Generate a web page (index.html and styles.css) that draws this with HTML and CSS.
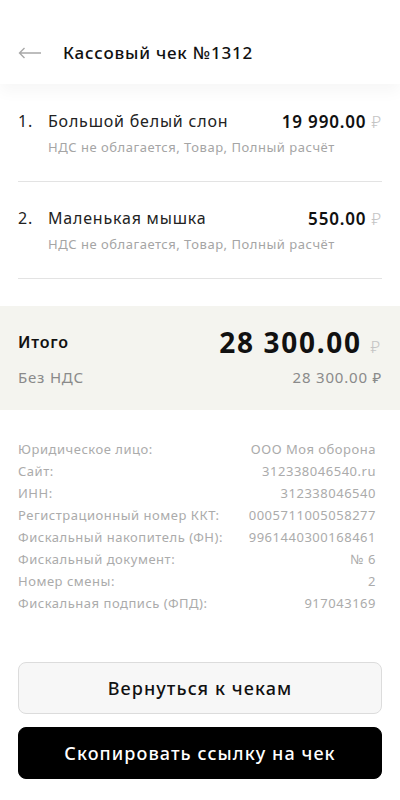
FILE: index.html
```html
<!DOCTYPE html>
<html lang="ru">
<head>
  <meta charset="utf-8">
  <title>Кассовый чек №1312</title>
  <link rel="stylesheet" href="styles.css">
</head>
<body>
  <div class="header">
    <span class="back">
      <svg width="24" height="12" viewBox="0 0 24 12"><path d="M23 6H1.5M6.5 1L1.5 6l5 5" fill="none" stroke="#a8a8a8" stroke-width="1.4"/></svg>
    </span>
    <span class="title">Кассовый чек №1312</span>
  </div>

  <div class="items">
    <div class="item">
      <div class="item-row">
        <span class="num">1.</span>
        <span class="name">Большой белый слон</span>
        <span class="price">19 990.00 <span class="rub">₽</span></span>
      </div>
      <div class="item-sub">НДС не облагается, Товар, Полный расчёт</div>
    </div>
    <div class="item">
      <div class="item-row">
        <span class="num">2.</span>
        <span class="name">Маленькая мышка</span>
        <span class="price">550.00 <span class="rub">₽</span></span>
      </div>
      <div class="item-sub">НДС не облагается, Товар, Полный расчёт</div>
    </div>
  </div>

  <div class="total">
    <div class="total-row">
      <span class="total-label">Итого</span>
      <span class="total-sum">28 300.00 <span class="rub">₽</span></span>
    </div>
    <div class="vat-row">
      <span>Без НДС</span>
      <span>28 300.00 ₽</span>
    </div>
  </div>

  <div class="info">
    <div class="info-row"><span>Юридическое лицо:</span><span>ООО Моя оборона</span></div>
    <div class="info-row"><span>Сайт:</span><span>312338046540.ru</span></div>
    <div class="info-row"><span>ИНН:</span><span>312338046540</span></div>
    <div class="info-row"><span>Регистрационный номер ККТ:</span><span>0005711005058277</span></div>
    <div class="info-row"><span>Фискальный накопитель (ФН):</span><span>9961440300168461</span></div>
    <div class="info-row"><span>Фискальный документ:</span><span>№ 6</span></div>
    <div class="info-row"><span>Номер смены:</span><span>2</span></div>
    <div class="info-row"><span>Фискальная подпись (ФПД):</span><span>917043169</span></div>
  </div>

  <div class="buttons">
    <button class="btn btn-light">Вернуться к чекам</button>
    <button class="btn btn-dark">Скопировать ссылку на чек</button>
  </div>
</body>
</html>
```

FILE: styles.css
```css
body {
  margin: 0;
  background: #fff;
  color: #111;
  font-family: "Noto Sans", "Liberation Sans", sans-serif;
  letter-spacing: 0.05em;
}

.header {
  height: 64px;
  display: flex;
  align-items: center;
  padding: 20px 18px 0;
  box-shadow: 0 8px 14px rgba(0, 0, 0, 0.035);
  position: relative;
}
.back {
  width: 45px;
  display: flex;
  align-items: center;
  padding-top: 2px;
}
.title {
  font-size: 17px;
  font-weight: 500;
  color: #111;
}

.items {
  padding: 0 18px;
}
.item {
  padding: 25px 0 24px;
  border-bottom: 1px solid #e3e3e3;
}
.item + .item {
  padding-top: 24px;
}
.item-row {
  display: flex;
  align-items: center;
  height: 24px;
  font-size: 16px;
}
.num {
  width: 30px;
  color: #222;
}
.name {
  flex: 1;
  color: #222;
}
.price {
  font-size: 17px;
  font-weight: 600;
  color: #111;
}
.rub {
  font-weight: 300;
  color: #c4c4c4;
}
.item-sub {
  margin-top: 4px;
  padding-left: 30px;
  font-size: 13px;
  line-height: 20px;
  letter-spacing: 0.04em;
  color: #a5a5a5;
}

.total {
  margin-top: 27px;
  background: #f4f4ef;
  padding: 19px 18px 22px;
}
.total-row {
  display: flex;
  justify-content: space-between;
  align-items: center;
  height: 34px;
}
.total-label {
  font-size: 16px;
  font-weight: 600;
}
.total-sum {
  font-size: 28px;
  font-weight: 700;
  letter-spacing: 0.06em;
}
.total-sum .rub {
  font-size: 17px;
}
.vat-row {
  display: flex;
  justify-content: space-between;
  margin-top: 7px;
  font-size: 15px;
  line-height: 22px;
  color: #8a8a8a;
}

.info {
  margin-top: 28px;
  padding: 0 24px 0 18px;
}
.info-row {
  display: flex;
  justify-content: space-between;
  font-size: 13px;
  line-height: 22px;
  letter-spacing: 0.04em;
  color: #ababab;
}

.buttons {
  margin-top: 48px;
  padding: 0 18px;
  display: flex;
  flex-direction: column;
  gap: 13px;
}
.btn {
  height: 52px;
  border-radius: 8px;
  font-family: inherit;
  letter-spacing: 0.06em;
  font-size: 18px;
  font-weight: 500;
}
.btn-light {
  background: #f7f7f7;
  border: 1px solid #dcdcdc;
  color: #111;
}
.btn-dark {
  background: #000;
  border: 1px solid #000;
  color: #fff;
}
```
